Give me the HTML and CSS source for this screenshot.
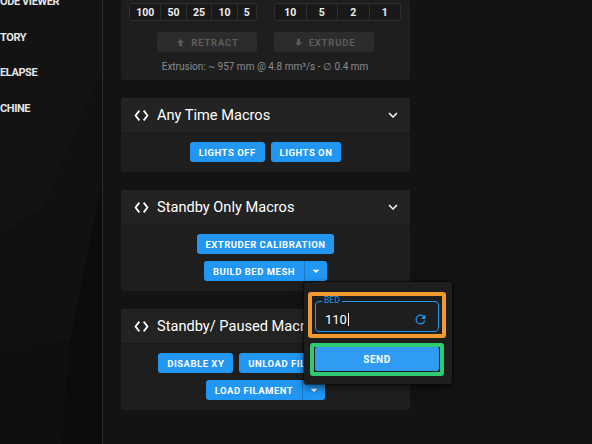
FILE: index.html
```html
<!DOCTYPE html>
<html lang="en">
<head>
<meta charset="utf-8">
<title>Macros</title>
<link rel="stylesheet" href="styles.css">
</head>
<body>
<div class="app">
  <aside class="sidebar">
    <svg class="sidebar-bg" width="102" height="444" viewBox="0 0 102 444">
      <rect width="102" height="444" fill="#101010"/>
      <polygon points="0,0 102,0 102,70 45,205 0,235" fill="#131313"/>
      <polygon points="45,205 102,70 102,180 70,340 60,420" fill="#111111"/>
      <polygon points="70,340 102,180 102,444 62,444" fill="#0c0c0c"/>
      <polygon points="0,350 70,340 62,444 0,444" fill="#0f0f0f"/>
    </svg>
    <nav class="nav">
      <div class="nav-item">ODE VIEWER</div>
      <div class="nav-item">TORY</div>
      <div class="nav-item">ELAPSE</div>
      <div class="nav-item">CHINE</div>
    </nav>
  </aside>

  <main class="main">
    <section class="panel panel-extrude">
      <div class="panel-body extrude-body">
        <div class="extrude-grid">
          <div class="extrude-col col-left">
            <div class="seg-group">
              <span class="seg">100</span><span class="seg">50</span><span class="seg">25</span><span class="seg">10</span><span class="seg">5</span>
            </div>
            <button class="btn btn-disabled">
              <svg class="btn-icon" viewBox="0 0 24 24"><path d="M15,20H9V12H4.16L12,4.16L19.84,12H15V20Z"/></svg>
              RETRACT
            </button>
          </div>
          <div class="extrude-col col-right">
            <div class="seg-group seg-equal">
              <span class="seg">10</span><span class="seg">5</span><span class="seg">2</span><span class="seg">1</span>
            </div>
            <button class="btn btn-disabled">
              <svg class="btn-icon" viewBox="0 0 24 24"><path d="M9,4H15V12H19.84L12,19.84L4.16,12H9V4Z"/></svg>
              EXTRUDE
            </button>
          </div>
        </div>
        <p class="extrude-info">Extrusion: ~ 957 mm @ 4.8 mm³/s - ∅ 0.4 mm</p>
      </div>
    </section>

    <section class="panel">
      <header class="panel-head">
        <svg class="code-icon" viewBox="0 0 16 12"><polyline points="5,1.5 1.5,6 5,10.5"/><polyline points="11,1.5 14.5,6 11,10.5"/></svg>
        <h2 class="panel-title">Any Time Macros</h2>
        <svg class="chev" viewBox="0 0 24 24"><path d="M7.41,8.58L12,13.17L16.59,8.58L18,10L12,16L6,10L7.41,8.58Z"/></svg>
      </header>
      <div class="panel-body">
        <div class="btn-row">
          <button class="btn">LIGHTS OFF</button>
          <button class="btn">LIGHTS ON</button>
        </div>
      </div>
    </section>

    <section class="panel">
      <header class="panel-head">
        <svg class="code-icon" viewBox="0 0 16 12"><polyline points="5,1.5 1.5,6 5,10.5"/><polyline points="11,1.5 14.5,6 11,10.5"/></svg>
        <h2 class="panel-title">Standby Only Macros</h2>
        <svg class="chev" viewBox="0 0 24 24"><path d="M7.41,8.58L12,13.17L16.59,8.58L18,10L12,16L6,10L7.41,8.58Z"/></svg>
      </header>
      <div class="panel-body">
        <div class="btn-row">
          <button class="btn">EXTRUDER CALIBRATION</button>
        </div>
        <div class="btn-row">
          <div class="split">
            <button class="btn split-main">BUILD BED MESH</button>
            <button class="btn split-drop"><svg viewBox="0 0 24 24"><path d="M7,10L12,15L17,10H7Z"/></svg></button>
          </div>
        </div>
      </div>
    </section>

    <section class="panel">
      <header class="panel-head">
        <svg class="code-icon" viewBox="0 0 16 12"><polyline points="5,1.5 1.5,6 5,10.5"/><polyline points="11,1.5 14.5,6 11,10.5"/></svg>
        <h2 class="panel-title">Standby/ Paused Macros</h2>
        <svg class="chev" viewBox="0 0 24 24"><path d="M7.41,8.58L12,13.17L16.59,8.58L18,10L12,16L6,10L7.41,8.58Z"/></svg>
      </header>
      <div class="panel-body">
        <div class="btn-row">
          <button class="btn">DISABLE XY</button>
          <div class="split">
            <button class="btn split-main">UNLOAD FILAMENT</button>
            <button class="btn split-drop"><svg viewBox="0 0 24 24"><path d="M7,10L12,15L17,10H7Z"/></svg></button>
          </div>
        </div>
        <div class="btn-row">
          <div class="split">
            <button class="btn split-main">LOAD FILAMENT</button>
            <button class="btn split-drop"><svg viewBox="0 0 24 24"><path d="M7,10L12,15L17,10H7Z"/></svg></button>
          </div>
        </div>
      </div>
    </section>
  </main>

  <div class="popup">
    <div class="mark mark-orange">
      <div class="field">
        <span class="field-label">BED</span>
        <span class="field-value">110</span><span class="caret"></span>
        <svg class="field-icon" viewBox="0 0 24 24"><path d="M17.65,6.35C16.2,4.9 14.21,4 12,4A8,8 0 0,0 4,12A8,8 0 0,0 12,20C15.73,20 18.840,17.45 19.73,14H17.65C16.83,16.33 14.61,18 12,18A6,6 0 0,1 6,12A6,6 0 0,1 12,6C13.66,6 15.14,6.69 16.22,7.78L13,11H20V4L17.65,6.35Z"/></svg>
      </div>
    </div>
    <div class="mark mark-green">
      <button class="btn send-btn">SEND</button>
    </div>
  </div>
</div>
</body>
</html>
```
FILE: styles.css
```css
* { box-sizing: border-box; }

html, body {
  margin: 0;
  padding: 0;
  background: #131313;
  font-family: Roboto, "Noto Sans", sans-serif;
  color: #fff;
}

.app {
  position: relative;
  display: flex;
  width: 592px;
  height: 444px;
  overflow: hidden;
}

/* Sidebar */
.sidebar {
  position: relative;
  width: 103px;
  flex: 0 0 103px;
  border-right: 1px solid #2c2c2c;
  overflow: hidden;
}
.sidebar-bg {
  position: absolute;
  left: 0;
  top: 0;
}
.nav {
  position: relative;
  margin-top: -16px;
  display: flex;
  flex-direction: column;
}
.nav-item {
  height: 35.5px;
  display: flex;
  align-items: center;
  font-size: 11px;
  font-weight: 700;
  color: #e6e6e6;
  white-space: nowrap;
  letter-spacing: -0.4px;
}

/* Main column */
.main {
  flex: 0 0 auto;
  width: 289px;
  margin-left: 18px;
  display: flex;
  flex-direction: column;
  gap: 18px;
}

.panel {
  background: #1e1e1e;
  border-radius: 3px;
  overflow: hidden;
}
.panel-head {
  height: 35px;
  display: flex;
  align-items: center;
  padding: 0 8px 0 13px;
  background: #232323;
  border-bottom: 1px solid #1a1a1a;
}
.code-icon {
  width: 15px;
  height: 11px;
  fill: none;
  stroke: #fff;
  stroke-width: 2;
  stroke-linecap: square;
  flex: 0 0 auto;
}
.panel-title {
  margin: 0 0 0 8px;
  font-size: 14.6px;
  font-weight: 400;
  color: #fff;
  flex: 1 1 auto;
  white-space: nowrap;
  overflow: hidden;
}
.chev {
  width: 18px;
  height: 18px;
  fill: #fff;
  flex: 0 0 auto;
}

.panel-body {
  padding: 9px 8px 10px;
  display: flex;
  flex-direction: column;
  gap: 7px;
}

.btn-row {
  display: flex;
  justify-content: center;
  gap: 6px;
}

.btn {
  height: 20px;
  border: none;
  border-radius: 3px;
  background: #2196f3;
  color: #fff;
  font-family: Roboto, "Noto Sans", sans-serif;
  font-size: 9.5px;
  font-weight: 700;
  letter-spacing: 0.5px;
  padding: 0 9px;
  display: inline-flex;
  align-items: center;
  justify-content: center;
  white-space: nowrap;
}

.split {
  display: flex;
}
.split-main {
  border-radius: 3px 0 0 3px;
}
.split-drop {
  width: 23px;
  padding: 0;
  border-radius: 0 3px 3px 0;
  border-left: 1px solid rgba(0, 0, 0, 0.18);
}
.split-drop svg {
  width: 16px;
  height: 16px;
  fill: #fff;
}

/* Extrude panel */
.extrude-body {
  padding: 3px 9px 7px 8px;
  gap: 0;
}
.extrude-grid {
  display: grid;
  grid-template-columns: 128px 127px;
  column-gap: 17px;
}
.extrude-col {
  display: flex;
  flex-direction: column;
  gap: 11px;
}
.col-left { align-items: flex-end; }
.col-right { align-items: flex-start; }

.seg-group {
  display: flex;
  width: 100%;
  height: 18px;
  border: 1px solid #2f2f2f;
  border-radius: 3px;
  background: #191919;
}
.seg {
  flex: 1 1 auto;
  display: flex;
  align-items: center;
  justify-content: center;
  font-size: 10.5px;
  font-weight: 700;
  color: #f0f0f0;
  border-left: 1px solid #2f2f2f;
}
.seg:first-child { border-left: none; }
.seg-equal .seg { flex: 1 1 0; }

.btn-disabled {
  width: 100px;
  background: #2c2c2c;
  color: #5c5c5c;
  gap: 5px;
  letter-spacing: 0.8px;
}
.btn-icon {
  width: 11px;
  height: 11px;
  fill: #5c5c5c;
}

.extrude-info {
  margin: 9px 0 0;
  text-align: center;
  font-size: 10px;
  line-height: 12px;
  color: #8c8c8c;
}

/* Popup menu */
.popup {
  position: absolute;
  left: 304px;
  top: 282px;
  width: 148px;
  height: 102px;
  background: #1e1e1e;
  border-radius: 3px;
  box-shadow: 0 3px 8px rgba(0, 0, 0, 0.6), 0 0 0 1px rgba(0, 0, 0, 0.4);
  padding-top: 10px;
  display: flex;
  flex-direction: column;
  gap: 5px;
}
.mark {
  border-radius: 3px;
}
.mark-orange {
  margin: 0 6px 0 4px;
  height: 46px;
  border: 4px solid #f39a2e;
  padding: 5px 3px 2px;
}
.mark-green {
  margin: 0 8px 0 6px;
  height: 33px;
  border: 4px solid #2fcb72;
  padding: 0 1px 1px;
  display: flex;
}
.field {
  position: relative;
  height: 31px;
  border: 1.5px solid #2196f3;
  border-radius: 4px;
  display: flex;
  align-items: center;
  padding: 5px 9px 0;
}
.field-label {
  position: absolute;
  left: 6px;
  top: -6px;
  padding: 0 2px;
  background: #1e1e1e;
  font-size: 8.5px;
  line-height: 9px;
  color: #2196f3;
}
.field-value {
  font-size: 13px;
  color: #fff;
}
.caret {
  width: 1px;
  height: 13px;
  background: #fff;
  margin-left: 1px;
}
.field-icon {
  width: 15px;
  height: 15px;
  fill: #2196f3;
  margin-left: auto;
  margin-right: 1px;
}
.send-btn {
  flex: 1 1 auto;
  height: 24px;
  border-radius: 2px;
  background: #2f9bf2;
  font-size: 10px;
}
```
